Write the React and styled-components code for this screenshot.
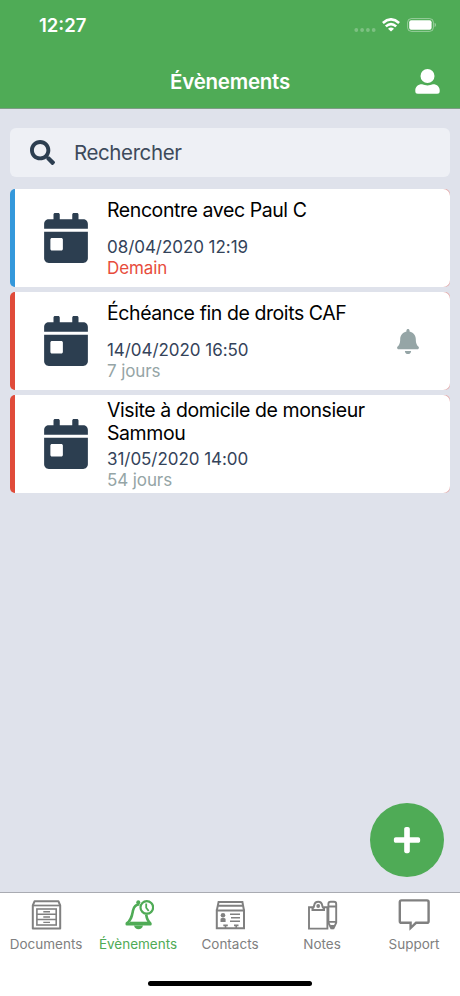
import React, {useState} from 'react'
import styled, {createGlobalStyle} from "styled-components";
import {FaBell, FaCalendarDay, FaPlus, FaSearch} from "react-icons/fa";

const events=[
  {
    title:"Rencontre avec Paul C",
    date:"08/04/2020 12:19",
    delay:"Demain",
    color:"#3498db",
    urgent:true
  },
  {
    title:"Échéance fin de droits CAF",
    date:"14/04/2020 16:50",
    delay:"7 jours",
    color:"#e04b3a",
    reminder:true
  },
  {
    title:"Visite à domicile de monsieur Sammou",
    date:"31/05/2020 14:00",
    delay:"54 jours",
    color:"#e04b3a"
  },
]

const UserIcon = () => (
  <svg width="25" height="25" viewBox="0 0 25 25" fill="currentColor">
    <circle cx="12.5" cy="7" r="7" />
    <path d="M7 15.3Q12.5 17.6 18 15.3C22.2 15.3 24.7 18 24.7 21.3V22.2Q24.7 24.7 22.2 24.7H2.8Q.3 24.7 .3 22.2V21.3C.3 18 2.8 15.3 7 15.3Z" />
  </svg>
)

const DocumentsIcon = () => (
  <svg width="32" height="32" viewBox="0 0 32 32" fill="none" stroke="currentColor">
    <path d="M2.8 6.5V29.4H30.2V6.5L28.5 2.3H4.5Z" strokeWidth="2" strokeLinejoin="round" />
    <path d="M2.8 6.5H30.2" strokeWidth="1.7" />
    <rect x="6.9" y="10" width="19.3" height="16" strokeWidth="1.6" />
    <path d="M6.9 15.3H26.2M6.9 20.6H26.2" strokeWidth="1.5" />
    <path d="M13.3 12.8H20M13.3 18H20M13.3 23.4H20" strokeWidth="1.4" />
  </svg>
)

const EventsIcon = () => (
  <svg width="32" height="32" viewBox="0 0 32 32" fill="none" stroke="currentColor">
    <path d="M17.5 5.2C13.3 5.4 11.8 7.8 11 11.5C10 16.5 9.6 20.8 4.8 24.4V25.2H28.4V24.4C25.8 22.2 24.7 19.5 24.2 15.5" strokeWidth="2.6" strokeLinejoin="round" />
    <path d="M7.5 24H26.5" strokeWidth="2.6" />
    <path d="M12 26.5H21Q20 30.3 16.5 30.3T12 26.5Z" fill="currentColor" stroke="none" />
    <circle cx="16.3" cy="3.2" r="2" fill="currentColor" stroke="none" />
    <circle cx="24.8" cy="8.4" r="6.3" strokeWidth="2.2" />
    <path d="M24.2 4.6V8.8L26.7 12" strokeWidth="1.8" />
  </svg>
)

const ContactsIcon = () => (
  <svg width="32" height="32" viewBox="0 0 32 32" fill="none" stroke="currentColor">
    <path d="M2.8 11.5V29.3H30V11.5Z" strokeWidth="2" />
    <path d="M2.8 11.5L4.6 2.9H28.4L30 11.5M4 6.7H29" strokeWidth="2" />
    <circle cx="9" cy="16.2" r="2.3" fill="currentColor" stroke="none" />
    <path d="M6.5 23V19.7Q9 17.6 11.6 19.7V23Z" fill="currentColor" stroke="none" />
    <path d="M16 15.3H26M17 18.8H26M16 22.2H26" strokeWidth="1.6" />
    <path d="M9.3 26.4H13.8M11.5 26V29M20 26.4H24.5M22.2 26V29" strokeWidth="1.6" />
  </svg>
)

const NotesIcon = () => (
  <svg width="32" height="32" viewBox="0 0 32 32" fill="none" stroke="currentColor">
    <path d="M7 8.2H3V29.6H21.4V8.2H17.5" strokeWidth="1.9" />
    <path d="M6.5 11V9.3Q8 8.3 8.2 6.3Q8.8 2.7 12.2 2.7T16.2 6.3Q16.4 8.3 18 9.3V11Z" strokeWidth="2" />
    <circle cx="12.2" cy="7" r="1.9" fill="currentColor" stroke="none" />
    <path d="M22.4 5Q22.4 2.8 24.6 2.8H28Q30.2 2.8 30.2 5V23.7L27.5 29.3H25.2L22.4 23.7ZM22.4 7.5H30.2M22.4 22.9H30.2" strokeWidth="1.9" />
    <path d="M24.6 26.5H28L27 29.6H25.6Z" fill="currentColor" />
  </svg>
)

const SupportIcon = () => (
  <svg width="32" height="32" viewBox="0 0 32 32" fill="none" stroke="currentColor">
    <path d="M3.4 1.4H29Q30.6 1.4 30.6 3V22.2Q30.6 23.8 29 23.8H18L12.6 29V23.8H3.4Q1.8 23.8 1.8 22.2V3Q1.8 1.4 3.4 1.4Z" strokeWidth="2.4" />
  </svg>
)

const tabs=[
  {label:"Documents", Icon:DocumentsIcon},
  {label:"Évènements", Icon:EventsIcon},
  {label:"Contacts", Icon:ContactsIcon},
  {label:"Notes", Icon:NotesIcon},
  {label:"Support", Icon:SupportIcon},
]

const App = () => {

  const [active, setActive]=useState(1);

  return (
    <>
      <GlobalStyle />
      <Screen>
        <Header>
          <StatusBar>
            <time>12:27</time>
            <div className="signals">
              <svg width="22" height="6" viewBox="0 0 22 6" fill="#fff" opacity=".26">
                <circle cx="2.3" cy="3" r="1.9" />
                <circle cx="8.1" cy="3" r="1.9" />
                <circle cx="13.9" cy="3" r="1.9" />
                <circle cx="19.7" cy="3" r="1.9" />
              </svg>
              <svg width="18" height="14" viewBox="0 0 18 14" fill="none" stroke="#fff" strokeWidth="2.6">
                <path d="M.9 5Q9-2.3 17.1 5" />
                <path d="M3.8 8.4Q9 3.8 14.2 8.4" />
                <path d="M9 13.6L6 10.7Q9 8.3 12 10.7Z" fill="#fff" stroke="none" />
              </svg>
              <svg width="30" height="14" viewBox="0 0 30 14">
                <rect x=".6" y=".6" width="25.8" height="12.8" rx="3.8" fill="none" stroke="#fff" strokeOpacity=".42" />
                <rect x="2.2" y="2.2" width="22.4" height="9.6" rx="2" fill="#fff" />
                <path d="M27.6 4.8Q29 5.4 29 7T27.6 9.2Z" fill="#fff" fillOpacity=".45" />
              </svg>
            </div>
          </StatusBar>
          <TitleBar>
            <h1>Évènements</h1>
            <ProfileButton aria-label="Profil"><UserIcon /></ProfileButton>
          </TitleBar>
        </Header>
        <Content>
          <SearchBar>
            <FaSearch size={25} />
            <input placeholder="Rechercher" />
          </SearchBar>
          <EventList>
            {
              events.map((event)=>(
                <EventCard key={event.title} $color={event.color}>
                  <CardBody>
                    <FaCalendarDay className="calendar" />
                    <div className="details">
                      <h2>{event.title}</h2>
                      <p>{event.date}</p>
                      <Delay $urgent={event.urgent}>{event.delay}</Delay>
                    </div>
                    {event.reminder && <FaBell className="bell" />}
                  </CardBody>
                </EventCard>
              ))
            }
          </EventList>
          <AddButton aria-label="Ajouter"><FaPlus size={30} /></AddButton>
        </Content>
        <TabBar>
          {
            tabs.map(({label, Icon}, index)=>(
              <Tab key={label} $active={active===index} onClick={()=>setActive(index)}>
                <Icon />
                <span>{label}</span>
              </Tab>
            ))
          }
          <HomeIndicator />
        </TabBar>
      </Screen>
    </>
  )
}

export default App

const GlobalStyle=createGlobalStyle`
  *{
    box-sizing:border-box;
    margin:0;
    padding:0;
  }
  body{
    font-family:Inter, "Liberation Sans", sans-serif;
  }
  button, input{
    font:inherit;
    border:none;
    background:none;
  }
  svg{
    flex-shrink:0;
  }
`;

const Screen=styled.div`
  display:flex;
  flex-direction:column;
  width:460px;
  height:996px;
  overflow:hidden;
  background-color:#dfe2eb;
`;

const Header=styled.header`
  height:109px;
  color:#fff;
  background-color:#4fab56;
  border-bottom:1px solid #7e9c86;
`;

const StatusBar=styled.div`
  display:flex;
  justify-content:space-between;
  align-items:center;
  height:54px;
  padding:0 23px 4px 39px;
  time{
    font-size:18.5px;
    font-weight:600;
    letter-spacing:0;
  }
  .signals{
    display:flex;
    align-items:center;
    gap:6px;
    svg:first-child{
      margin-top:9px;
    }
    svg:last-child{
      margin-left:1px;
    }
  }
`;

const TitleBar=styled.div`
  display:grid;
  grid-template-columns:1fr auto 1fr;
  align-items:center;
  height:54px;
  padding:1px 20px 0;
  h1{
    grid-column:2;
    font-size:20.5px;
    font-weight:600;
    line-height:24px;
    letter-spacing:-0.25px;
  }
`;

const ProfileButton=styled.button`
  display:flex;
  justify-self:end;
  color:#fff;
`;

const Content=styled.main`
  position:relative;
  flex:1;
  padding:19px 10px 0;
`;

const SearchBar=styled.label`
  display:flex;
  align-items:center;
  gap:19px;
  height:49px;
  padding:0 20px 1px;
  border-radius:6px;
  color:#2c3e50;
  background-color:#eef0f5;
  input{
    flex:1;
    font-size:20.5px;
    letter-spacing:-0.4px;
    outline:none;
    color:#2c3e50;
    &::placeholder{
      color:#3d4a5b;
      opacity:1;
    }
  }
`;

const EventList=styled.section`
  display:flex;
  flex-direction:column;
  gap:5px;
  margin-top:12px;
`;

const EventCard=styled.article`
  height:98px;
  border-left:5px solid ${({$color})=>$color};
  border-radius:5px;
  background-color:#e3a9a9;
`;

const CardBody=styled.div`
  display:flex;
  align-items:center;
  height:100%;
  padding:0 31px 0 29px;
  border-radius:0 7px 7px 0;
  background-color:#fff;
  .calendar{
    width:44px;
    height:50px;
    color:#2c3e50;
  }
  .details{
    flex:1;
    display:flex;
    flex-direction:column;
    padding:0 20px 0 19px;
  }
  h2{
    min-height:39px;
    padding:1px 0 4px;
    font-size:19.5px;
    font-weight:400;
    line-height:23px;
    letter-spacing:-0.42px;
    color:#000;
  }
  p{
    font-size:17px;
    line-height:21px;
    letter-spacing:-0.05px;
    color:#34435a;
  }
  .bell{
    width:22px;
    height:25px;
    color:#95a5a6;
  }
`;

const Delay=styled.span`
  font-size:17px;
  line-height:21px;
  letter-spacing:-0.1px;
  color:${({$urgent})=>$urgent ? "#e74c3c":"#95a5a6"};
`;

const AddButton=styled.button`
  position:absolute;
  right:16px;
  bottom:15px;
  display:flex;
  align-items:center;
  justify-content:center;
  width:74px;
  height:74px;
  border-radius:50%;
  color:#fff;
  background-color:#4fab56;
`;

const TabBar=styled.nav`
  position:relative;
  display:grid;
  grid-template-columns:repeat(5, 1fr);
  height:104px;
  border-top:1px solid #a9abb2;
  background-color:#fff;
`;

const Tab=styled.button`
  display:flex;
  flex-direction:column;
  align-items:center;
  gap:4px;
  padding-top:6px;
  color:${({$active})=>$active ? "#4fab56":"#808080"};
  span{
    font-size:13.5px;
    line-height:18px;
    letter-spacing:0;
  }
`;

const HomeIndicator=styled.div`
  position:absolute;
  left:148px;
  bottom:10px;
  width:164px;
  height:5px;
  border-radius:3px;
  background-color:#000;
`;
